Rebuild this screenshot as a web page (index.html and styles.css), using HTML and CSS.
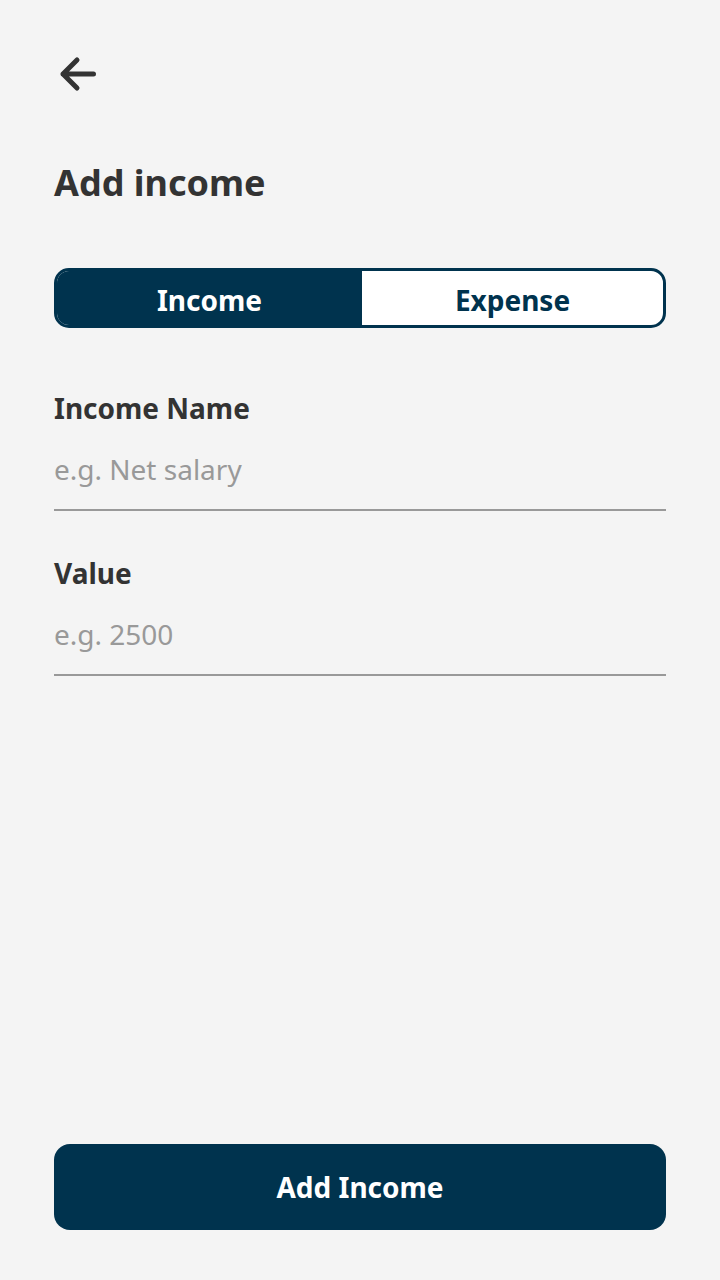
FILE: index.html
```html
<!DOCTYPE html>
<html>
<head>
<meta charset="utf-8">
<link rel="stylesheet" href="styles.css">
</head>
<body>
<div class="screen">
  <div class="top">
    <button class="back" aria-label="Back">
      <svg width="44" height="40" viewBox="0 0 44 40"><path d="M39.5 20H9M23 6L9 20L23 34" fill="none" stroke="#333" stroke-width="5" stroke-linecap="round" stroke-linejoin="round"/></svg>
    </button>
    <h1 class="title">Add income</h1>
    <div class="toggle">
      <div class="seg seg-active">Income</div>
      <div class="seg">Expense</div>
    </div>
    <div class="field">
      <label class="label">Income Name</label>
      <div class="input">e.g. Net salary</div>
    </div>
    <div class="field">
      <label class="label">Value</label>
      <div class="input">e.g. 2500</div>
    </div>
  </div>
  <button class="submit">Add Income</button>
</div>
</body>
</html>
```
FILE: styles.css
```css
* { box-sizing: border-box; }
html, body { margin: 0; padding: 0; }
body {
  background: #f4f4f4;
  font-family: "Noto Sans", "Open Sans", sans-serif;
  color: #333;
}
.screen {
  width: 720px;
  height: 1280px;
  padding: 54px 54px 50px;
  display: flex;
  flex-direction: column;
  justify-content: space-between;
}
.top { display: flex; flex-direction: column; }
.back {
  background: none;
  border: 0;
  padding: 0;
  margin: 0;
  width: 44px;
  height: 40px;
  cursor: pointer;
}
.back svg { display: block; }
.title {
  margin: 64px 0 0;
  font-size: 36px;
  font-weight: 700;
  line-height: 50px;
  color: #333;
}
.toggle {
  margin-top: 60px;
  height: 60px;
  display: flex;
  border: 3px solid #00334e;
  border-radius: 15px;
  overflow: hidden;
  background: #fff;
}
.seg {
  flex: 1;
  display: flex;
  align-items: center;
  justify-content: center;
  padding-top: 3px;
  font-size: 28px;
  font-weight: 700;
  color: #00334e;
}
.seg-active { flex: 0 0 305px; background: #00334e; color: #fff; }
.field { display: flex; flex-direction: column; margin-top: 62px; }
.field + .field { margin-top: 44px; }
.label {
  font-size: 28px;
  font-weight: 700;
  line-height: 36px;
  color: #333;
}
.input {
  margin-top: 24px;
  font-size: 28px;
  line-height: 38px;
  color: #999;
  padding-bottom: 21px;
  border-bottom: 2px solid #999;
}
.submit {
  height: 86px;
  border: 0;
  border-radius: 16px;
  background: #00334e;
  color: #fff;
  font-family: "Noto Sans", "Open Sans", sans-serif;
  font-size: 28px;
  font-weight: 700;
  cursor: pointer;
}
```
